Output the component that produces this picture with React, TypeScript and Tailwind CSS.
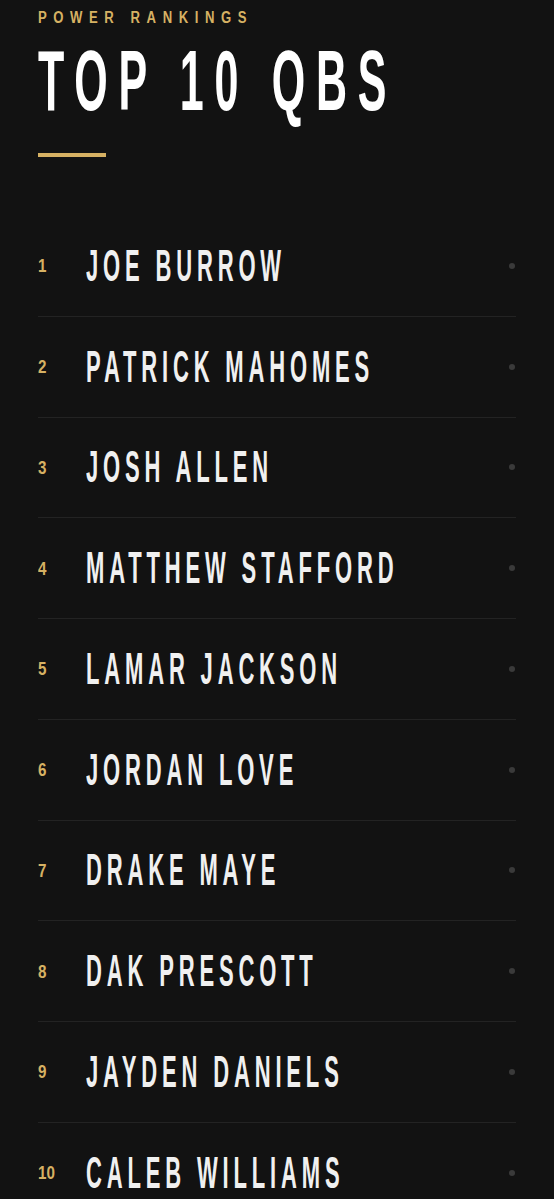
// Power rankings card: gold kicker, big condensed headline, numbered list of QBs.

const QBS = [
  "Joe Burrow",
  "Patrick Mahomes",
  "Josh Allen",
  "Matthew Stafford",
  "Lamar Jackson",
  "Jordan Love",
  "Drake Maye",
  "Dak Prescott",
  "Jayden Daniels",
  "Caleb Williams",
];

export default function App() {
  return (
    <div className="h-[1199px] overflow-hidden bg-[#121212] px-[38px] font-['Liberation_Sans',Arial,sans-serif]">
      {/* kicker */}
      <p className="pt-[10px] text-[16px] leading-[16px] font-bold uppercase text-[#d6b163]">
        <span className="inline-block origin-left scale-x-[0.82] whitespace-nowrap tracking-[8px]">
          Power Rankings
        </span>
      </p>

      {/* headline */}
      <h1 className="mt-[11px] h-[86px] text-[86px] leading-[86px] font-bold uppercase text-white">
        <span className="inline-block origin-left scale-x-[0.5] whitespace-nowrap tracking-[0.25em]">
          Top 10 QBs
        </span>
      </h1>

      <div className="mt-[30px] h-[4px] w-[68px] bg-[#d6b163]" />

      <ol className="mt-[59px]">
        {QBS.map((name, i) => (
          <li
            key={name}
            className="box-border flex h-[100.75px] items-center border-b border-[#232323]"
          >
            <span className="w-[48px] shrink-0 text-[19px] leading-[19px] font-bold text-[#d6b163]">
              <span className="inline-block origin-left scale-x-[0.8]">{i + 1}</span>
            </span>
            <span className="w-0 min-w-0 flex-1 text-[44px] leading-[44px] font-bold uppercase text-[#f0f0f0]">
              <span className="inline-block origin-left scale-x-[0.5] whitespace-nowrap tracking-[0.22em]">
                {name}
              </span>
            </span>
            <span className="mr-[1px] size-[6px] shrink-0 rounded-full bg-[#3a3a3a]" />
          </li>
        ))}
      </ol>
    </div>
  );
}
